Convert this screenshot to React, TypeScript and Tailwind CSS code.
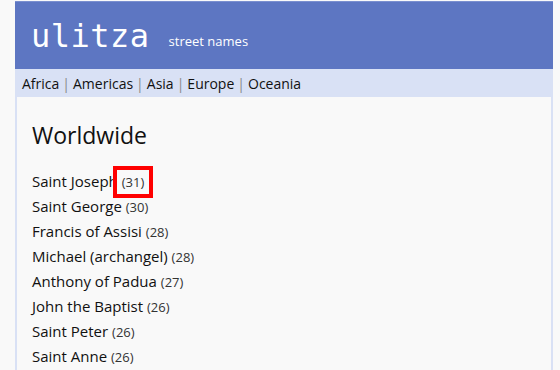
const saints: [string, number][] = [
  ["Saint Joseph", 31],
  ["Saint George", 30],
  ["Francis of Assisi", 28],
  ["Michael (archangel)", 28],
  ["Anthony of Padua", 27],
  ["John the Baptist", 26],
  ["Saint Peter", 26],
  ["Saint Anne", 26],
];

const regions = ["Africa", "Americas", "Asia", "Europe", "Oceania"];

export default function App() {
  return (
    <div
      className="h-[370px] overflow-hidden bg-[#f9f9f9] pt-[1px] text-[#111]"
      style={{ fontFamily: '"Open Sans", "Noto Sans", sans-serif' }}
    >
      <div className="ml-[15px] w-[538px]">
        {/* Header */}
        <div className="h-[68px] bg-[#5d76c2] border-t border-[#7a8fcf] flex items-end pb-[17px] pl-[16px]">
          <span className="text-white text-[32px] leading-none font-['DejaVu_Sans_Mono',monospace] tracking-[0.5px]">
            ulitza
          </span>
          <span className="text-white text-[13px] ml-[19px] mb-[1px]">street names</span>
        </div>

        {/* Region nav */}
        <div className="h-[28px] bg-[#d9e1f5] flex items-center pl-[7px] pt-[1px] text-[14px]">
          {regions.map((r, i) => (
            <span key={r} className="flex items-center">
              {i > 0 && <span className="text-[#888] mx-[3px]">|</span>}
              <span>{r}</span>
            </span>
          ))}
        </div>

        {/* Content */}
        <div className="bg-[#d9e1f5] px-[2px]">
          <div className="bg-[#f9f9f9] pl-[15px] pt-[22px] pb-[20px]">
            <h1 className="text-[23px] leading-[32px] mb-[18px]">Worldwide</h1>
            <ul>
              {saints.map(([name, n], i) => (
                <li key={name} className="text-[15px] leading-[25px] h-[25px]">
                  {name}{" "}
                  {i === 0 ? (
                    <span className="relative text-[13px] leading-none text-[#333]">
                      ({n})
                      <span className="absolute -left-[9px] -right-[9px] -top-[7px] -bottom-[7px] border-[4px] border-[#ff0000]" />
                    </span>
                  ) : (
                    <span className="text-[13px] leading-none text-[#333]">({n})</span>
                  )}
                </li>
              ))}
            </ul>
          </div>
        </div>
      </div>
    </div>
  );
}
